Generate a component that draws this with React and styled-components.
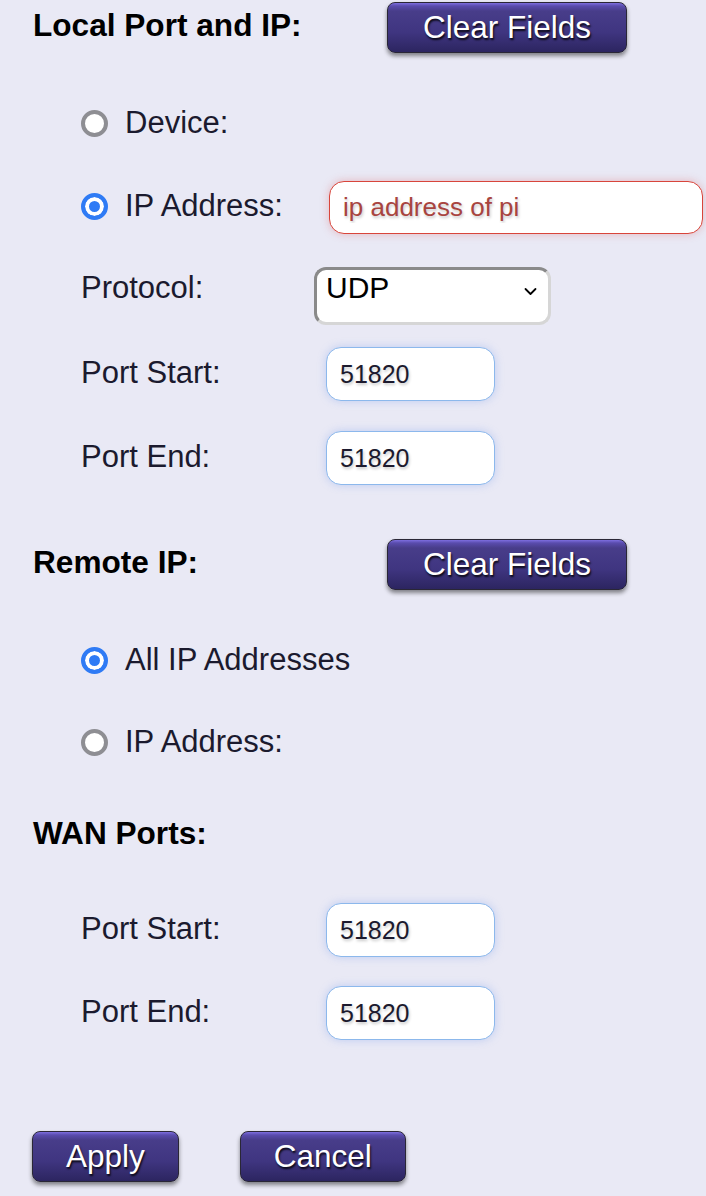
import styled, { createGlobalStyle } from 'styled-components';

const GlobalStyle = createGlobalStyle`
  html, body {
    margin: 0;
    padding: 0;
    background: #e9e9f5;
    font-family: "Liberation Sans", Arial, sans-serif;
  }
`;

const Page = styled.div`
  padding: 2px 0 14px 33px;
  width: 706px;
  box-sizing: border-box;
  overflow: hidden;
`;

const Section = styled.section`
  margin-top: ${({ $gap }) => $gap || 0}px;
`;

const HeaderRow = styled.div`
  display: flex;
  align-items: center;
  height: 51px;
`;

const Heading = styled.h2`
  margin: 0 0 6px;
  width: 354px;
  flex-shrink: 0;
  font-size: 31.6px;
  line-height: 36px;
  font-weight: 700;
  color: #000;
`;

const Button = styled.button`
  height: 51px;
  padding: 0 ${({ $pad }) => $pad || 34}px;
  border: 1px solid #2a2736;
  border-radius: 8px;
  background: linear-gradient(
    to bottom,
    #7d6ee0 0px,
    #5a4cad 3px,
    #483d8a 8px,
    #3f3580 60%,
    #2c2560 100%
  );
  box-shadow: 0 3px 4px rgba(0, 0, 0, 0.45);
  color: #fff;
  font-family: "Liberation Sans", Arial, sans-serif;
  font-size: 31.5px;
  line-height: 1;
  text-shadow: 1px 2px 2px rgba(0, 0, 0, 0.85);
  white-space: nowrap;
  cursor: pointer;
`;

const Fields = styled.div`
  padding-left: 48px;
`;

const Row = styled.div`
  display: flex;
  align-items: baseline;
  margin-top: ${({ $top }) => $top}px;
`;

const Label = styled.label`
  width: 233px;
  flex-shrink: 0;
  font-size: 31px;
  line-height: 36px;
  color: #1b1a2e;
`;

const Choice = styled.label`
  display: flex;
  align-items: baseline;
  gap: 17px;
  min-width: 233px;
  flex-shrink: 0;
  font-size: 31px;
  line-height: 36px;
  white-space: nowrap;
  color: #1b1a2e;
`;

const Radio = styled.input.attrs({ type: 'radio' })`
  appearance: none;
  align-self: center;
  margin: 0;
  width: 27px;
  height: 27px;
  flex-shrink: 0;
  box-sizing: border-box;
  border-radius: 50%;
  border: 4px solid #8e8e93;
  background: #fff;

  &:checked {
    border-color: #2f7bf5;
    background: #2f7bf5;
    box-shadow: inset 0 0 0 4px #fff;
  }
`;

const TextInput = styled.input`
  box-sizing: border-box;
  margin: 0 0 0 ${({ $offset }) => $offset || 0}px;
  width: ${({ $width }) => $width}px;
  height: ${({ $height }) => $height || 54}px;
  padding: 0 13px;
  border-radius: 15px;
  border: 1px solid ${({ $error }) => ($error ? '#d8453b' : '#8cb8ec')};
  background: #fff;
  box-shadow: 0 0 9px
    ${({ $error }) => ($error ? 'rgba(222, 90, 90, 0.35)' : 'rgba(110, 150, 235, 0.35)')};
  font-family: "Liberation Sans", Arial, sans-serif;
  font-size: ${({ $error }) => ($error ? 26 : 25)}px;
  color: ${({ $error }) => ($error ? '#a8443f' : '#1c1a2e')};
  text-shadow: 1px 2px 3px rgba(0, 0, 0, 0.22);
  outline: none;
`;

const SelectWrap = styled.div`
  position: relative;
  width: 237px;
`;

const Select = styled.select`
  appearance: none;
  box-sizing: border-box;
  width: 237px;
  height: 58px;
  margin: 0;
  padding: 0 40px 16px 9px;
  border-style: solid;
  border-width: 3px;
  border-color: #8a8a8a #d6d6d6 #d6d6d6 #8a8a8a;
  border-radius: 12px;
  background: #fff;
  font-family: "Liberation Sans", Arial, sans-serif;
  font-size: 30px;
  line-height: 32px;
  color: #000;
`;

const Chevron = styled.svg`
  position: absolute;
  right: 14px;
  top: 20px;
  width: 13px;
  height: 9px;
  pointer-events: none;
`;

const Footer = styled.div`
  display: flex;
  gap: 61px;
  margin: 91px 0 0 -1px;
`;

export default function App() {
  return (
    <Page>
      <GlobalStyle />

      <Section>
        <HeaderRow>
          <Heading>Local Port and IP:</Heading>
          <Button type="button" $pad={35}>Clear Fields</Button>
        </HeaderRow>
        <Fields>
          <Row $top={52}>
            <Choice>
              <Radio name="local" />
              Device:
            </Choice>
          </Row>
          <Row $top={40}>
            <Choice>
              <Radio name="local" defaultChecked />
              IP Address:
            </Choice>
            <TextInput $error $offset={15} $width={374} $height={53} defaultValue="ip address of pi" />
          </Row>
          <Row $top={33}>
            <Label>Protocol:</Label>
            <SelectWrap>
              <Select defaultValue="UDP">
                <option>UDP</option>
                <option>TCP</option>
                <option>Both</option>
              </Select>
              <Chevron viewBox="0 0 13 9">
                <path d="M1.5 2 L6.5 7 L11.5 2" fill="none" stroke="#000" strokeWidth="1.8" strokeLinecap="round" strokeLinejoin="round" />
              </Chevron>
            </SelectWrap>
          </Row>
          <Row $top={22}>
            <Label>Port Start:</Label>
            <TextInput $offset={12} $width={169} defaultValue="51820" />
          </Row>
          <Row $top={30}>
            <Label>Port End:</Label>
            <TextInput $offset={12} $width={169} defaultValue="51820" />
          </Row>
        </Fields>
      </Section>

      <Section $gap={54}>
        <HeaderRow>
          <Heading>Remote IP:</Heading>
          <Button type="button" $pad={35}>Clear Fields</Button>
        </HeaderRow>
        <Fields>
          <Row $top={52}>
            <Choice>
              <Radio name="remote" defaultChecked />
              All IP Addresses
            </Choice>
          </Row>
          <Row $top={46}>
            <Choice>
              <Radio name="remote" />
              IP Address:
            </Choice>
          </Row>
        </Fields>
      </Section>

      <Section $gap={50}>
        <HeaderRow>
          <Heading>WAN Ports:</Heading>
        </HeaderRow>
        <Fields>
          <Row $top={42}>
            <Label>Port Start:</Label>
            <TextInput $offset={12} $width={169} defaultValue="51820" />
          </Row>
          <Row $top={29}>
            <Label>Port End:</Label>
            <TextInput $offset={12} $width={169} defaultValue="51820" />
          </Row>
        </Fields>
      </Section>

      <Footer>
        <Button type="button" $pad={33}>Apply</Button>
        <Button type="button" $pad={33}>Cancel</Button>
      </Footer>
    </Page>
  );
}
